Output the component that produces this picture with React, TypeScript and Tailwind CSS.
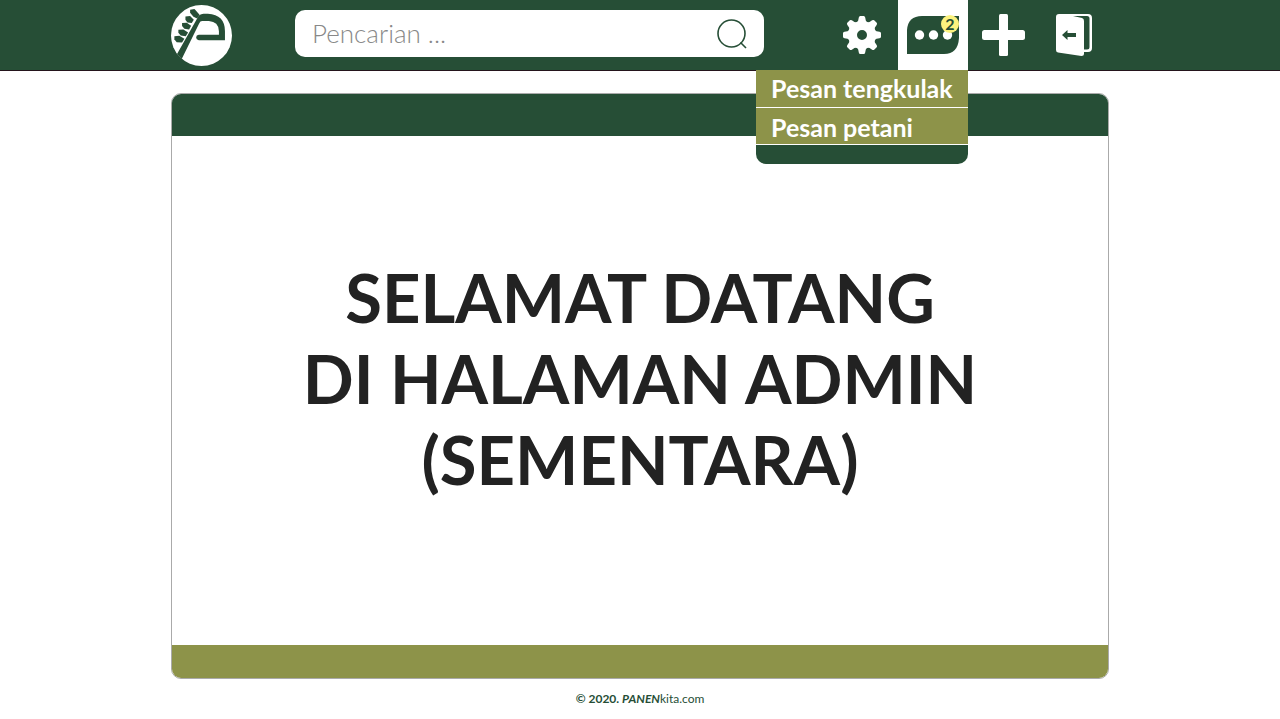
import React from "react";

function Logo() {
  return (
    <svg viewBox="35 14 182 182" className="size-[61px]" aria-hidden="true">
      <circle cx="126" cy="105" r="91" fill="#fff" />
      <g fill="#264e36">
        <path d="M53 160 L113 54 Q118 41 132 40 H145 Q196 43 196 92 V119 H118 Q110 117 110 111 Q110 104 118 103 H178 V92 Q177 64 148 62 H128 Q122 62 119 69 L67 175 Z" />
        <path d="M92 28 L105 26 L113 35 L120 43 L113 54 L102 49 L92 37 Z" />
        <path d="M78 48 L92 47 L103 58 L97 68 L84 66 L78 58 Z" />
        <path d="M68 68 L82 67 L95 76 L89 87 L75 85 L68 77 Z" />
        <path d="M57 88 L72 87 L86 96 L79 107 L64 105 L57 97 Z" />
        <path d="M45 107 L60 106 L75 115 L68 126 L52 125 L45 116 Z" />
      </g>
    </svg>
  );
}

function SearchIcon() {
  return (
    <svg viewBox="0 0 30 30" className="size-[30px]" fill="none" stroke="#264e36" strokeWidth="1.6" aria-hidden="true">
      <circle cx="14.5" cy="14.5" r="13.5" />
      <path d="M23.5 23.5 L29 29" />
    </svg>
  );
}

const teeth = [0, 45, 90, 135, 180, 225, 270, 315];

function GearIcon() {
  return (
    <svg viewBox="-19 -19 38 38" className="size-[38px]" fill="#fff" aria-hidden="true">
      {teeth.map((angle) => (
        <path key={angle} transform={`rotate(${angle})`} d="M-6 -11 L-3.8 -14.5 L-3.2 -17.5 Q-2.9 -19 -1.8 -19 H1.8 Q2.9 -19 3.200 -17.5 L3.8 -14.5 L6 -11 Z" />
      ))}
      <path fillRule="evenodd" d="M0 -14 A14 14 0 1 1 0 14 A14 14 0 1 1 0 -14 Z M0 -5 A5 5 0 1 0 0 5 A5 5 0 1 0 0 -5 Z" />
    </svg>
  );
}

function MessageIcon() {
  return (
    <svg viewBox="0 0 52 38" className="h-[38px] w-[52px]" aria-hidden="true">
      <path d="M0 38 V14 Q1 0 15 0 H52 V22 Q51 38 37 38 Z" fill="#264e36" />
      <g fill="#fff">
        <circle cx="12.5" cy="19" r="4.7" />
        <circle cx="26.5" cy="19" r="4.7" />
        <circle cx="40.5" cy="19" r="4.7" />
      </g>
    </svg>
  );
}

function PlusIcon() {
  return (
    <svg viewBox="0 0 43 42" className="h-[42px] w-[43px]" fill="#fff" aria-hidden="true">
      <rect x="17" width="9" height="42" rx="1.5" />
      <rect y="16" width="43" height="10" rx="2.5" />
    </svg>
  );
}

function DoorIcon() {
  return (
    <svg viewBox="0 0 36 42" className="h-[42px] w-[36px]" aria-hidden="true">
      <path fillRule="evenodd" d="M3 0 H32 Q36 0 36 4 V34 Q36 38 32 38 H28 V40 Q28 42 25.500 42 L2 38.500 Q0 38 0 36 V3 Q0 0 3 0 Z M17 2 L26 4 Q28 4.500 28 7 V35.500 H31 Q33.500 35.500 33.500 33 V4.500 Q33.500 2 31 2 Z" fill="#fff" />
      <path d="M6 21 L11.500 16 V19 H20 V23 H11.500 V26 Z" fill="#264e36" />
    </svg>
  );
}

export default function App() {
  return (
    <div className="flex min-h-screen flex-col bg-white font-['Century_Gothic','Lato',sans-serif] text-[#222]">
      <header className="border-b border-[#24141c] bg-[#264e36]">
        <div className="mx-auto flex h-[70px] w-full max-w-[938px] items-center">
          <a href="#beranda" aria-label="PANENkita">
            <Logo />
          </a>
          <form role="search" className="mb-[3px] ml-[63px] flex h-[47px] min-w-0 flex-1 items-center rounded-[10px] bg-white pr-[17px] pl-[17px]">
            <input
              type="search"
              aria-label="Pencarian"
              placeholder="Pencarian ..."
              className="min-w-0 flex-1 bg-transparent text-[26px] font-light text-[#264e36] outline-none placeholder:text-[#888]"
            />
            <button type="button" aria-label="Cari">
              <SearchIcon />
            </button>
          </form>
          <nav aria-label="Menu admin" className="ml-[79px] flex h-full items-center pr-[17px]">
            <button type="button" aria-label="Pengaturan">
              <GearIcon />
            </button>
            <div className="relative ml-[17px] h-full">
              <button type="button" aria-label="Pesan" aria-expanded="true" className="relative flex h-full w-[70px] items-center justify-center bg-white">
                <MessageIcon />
                <span className="absolute top-[15px] right-[9px] flex size-[18px] items-center justify-center rounded-full bg-[#fcf27e] text-base leading-none font-bold text-[#264e36]">2</span>
              </button>
              <ul className="absolute top-full right-0 z-10 w-[212px] rounded-b-[10px] bg-[#264e36] pb-[19px] text-[25px] font-bold text-white">
                <li className="border-b border-white bg-[#8d9349]">
                  <a href="#pesan-tengkulak" className="block px-[15px] leading-[37px] whitespace-nowrap">Pesan tengkulak</a>
                </li>
                <li className="border-b border-white bg-[#8d9349]">
                  <a href="#pesan-petani" className="block px-[15px] pt-[2px] leading-[34px] whitespace-nowrap">Pesan petani</a>
                </li>
              </ul>
            </div>
            <button type="button" aria-label="Tambah" className="ml-[14px]">
              <PlusIcon />
            </button>
            <button type="button" aria-label="Keluar" className="ml-[31px]">
              <DoorIcon />
            </button>
          </nav>
        </div>
      </header>
      <main className="mx-auto mt-[22px] flex w-full max-w-[938px] flex-1 flex-col overflow-hidden rounded-[10px] border border-[#aaa]">
        <div className="h-[42px] bg-[#264e36]" />
        <div className="flex flex-1 items-center justify-center pb-6">
          <h1 className="text-center text-[67px] leading-[81px] font-bold">
            SELAMAT DATANG
            <br />
            DI HALAMAN ADMIN
            <br />
            (SEMENTARA)
          </h1>
        </div>
        <div className="h-[33px] bg-[#8d9349]" />
      </main>
      <footer className="flex h-10 items-center justify-center text-xs text-[#264e36]">
        <p>
          <b>© 2020. <i>PANEN</i></b>kita.com
        </p>
      </footer>
    </div>
  );
}
